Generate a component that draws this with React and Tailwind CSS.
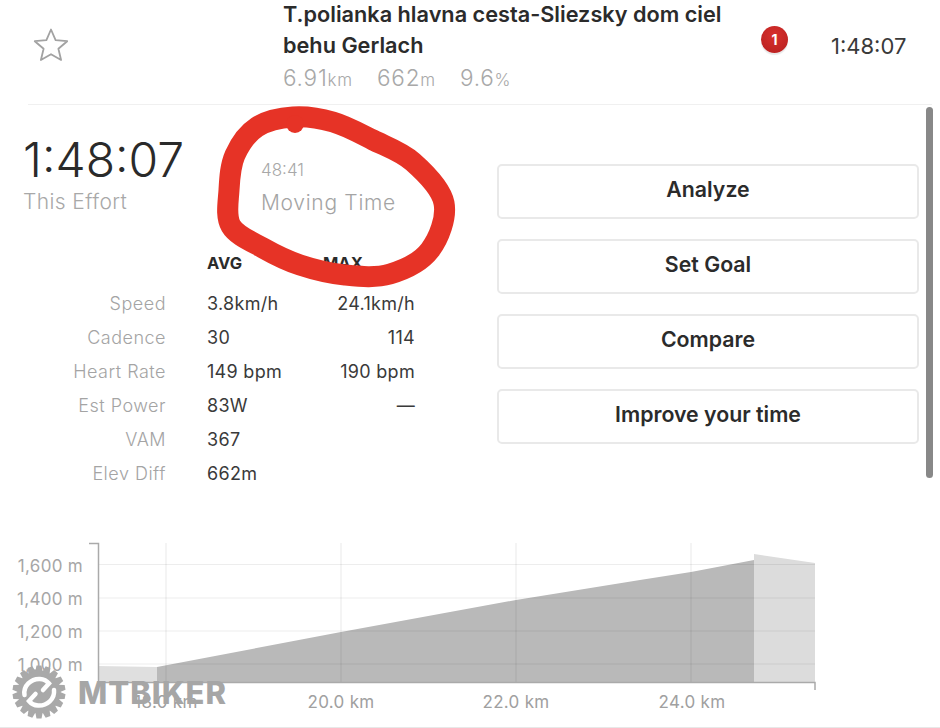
import React from "react";

function smooth(pts) {
  const n = pts.length;
  let d = `M${pts[0][0]} ${pts[0][1]}`;
  for (let i = 0; i < n; i++) {
    const p0 = pts[(i - 1 + n) % n], p1 = pts[i], p2 = pts[(i + 1) % n], p3 = pts[(i + 2) % n];
    const c1 = [p1[0] + (p2[0] - p0[0]) / 6, p1[1] + (p2[1] - p0[1]) / 6];
    const c2 = [p2[0] - (p3[0] - p1[0]) / 6, p2[1] - (p3[1] - p1[1]) / 6];
    d += ` C${c1[0]} ${c1[1]} ${c2[0]} ${c2[1]} ${p2[0]} ${p2[1]}`;
  }
  return d + "Z";
}

const scribble = [[293, 117], [333, 122], [373, 140], [413, 162], [444, 203], [430, 250], [390, 274], [345, 275], [300, 265], [263, 248], [231, 226], [229, 190], [235, 155], [257, 127]];

const rows = [
  ["Speed", "3.8km/h", "24.1km/h"],
  ["Cadence", "30", "114"],
  ["Heart Rate", "149 bpm", "190 bpm"],
  ["Est Power", "83W", "—"],
  ["VAM", "367", ""],
  ["Elev Diff", "662m", ""],
];

function Chart() {
  const gy = [36.5, 70, 103, 136];
  const gx = [166, 341, 516, 691];
  return (
    <svg width="940" height="200" viewBox="0 0 940 200" className="block" style={{ fontFamily: "Inter, sans-serif" }}>
      <polygon points="98,138 157,139 157,154 98,154" fill="#dfdfdf" />
      <polygon points="157,139 341,104 516,72 640,52 691,44 754,32 754,154 157,154" fill="#b9b9b9" />
      <polygon points="754,26 815,35 815,154 754,154" fill="#dcdcdc" />
      {gy.map((y) => (
        <line key={y} x1="98" x2="815" y1={y} y2={y} stroke="#000" strokeOpacity="0.07" />
      ))}
      {gx.map((x) => (
        <line key={x} x1={x} x2={x} y1="15" y2="154" stroke="#000" strokeOpacity="0.09" />
      ))}
      <path d="M89 15.5H98.5V154" fill="none" stroke="#aaa" strokeWidth="1.5" />
      <path d="M98 154.5H815V162" fill="none" stroke="#aaa" strokeWidth="1.5" />
      {[["1,600 m", 43.5], ["1,400 m", 76.5], ["1,200 m", 109.5], ["1,000 m", 142.5]].map(([t, y]) => (
        <text key={t} x="83" y={y} textAnchor="end" fontSize="17" letterSpacing="0.3" fill="#a6a6a6">{t}</text>
      ))}
      {[["18.0 km", 166], ["20.0 km", 341], ["22.0 km", 516], ["24.0 km", 692]].map(([t, x]) => (
        <text key={t} x={x} y="180" textAnchor="middle" fontSize="17" letterSpacing="0.3" fill="#a0a0a0">{t}</text>
      ))}
    </svg>
  );
}

function Gear() {
  const teeth = Array.from({ length: 18 }, (_, i) => (i * 360) / 18);
  return (
    <svg width="54" height="54" viewBox="0 0 54 54">
      {teeth.map((a) => (
        <polygon key={a} points="24.5,0.5 29.5,0.5 31,8 23,8" fill="#a9a9a9" transform={`rotate(${a} 27 27)`} />
      ))}
      <circle cx="27" cy="27" r="21.5" fill="#a9a9a9" />
      <path d="M12.5 30 C11 21 19 13.5 28 14 C32 14.2 35 16 37 18.5 L31 25" fill="none" stroke="#fff" strokeWidth="4.5" strokeLinecap="round" />
      <path d="M42 25 C43 34 35 41 26 40.5 C22 40.3 19 38.5 17 36 L23.5 29" fill="none" stroke="#fff" strokeWidth="4.5" strokeLinecap="round" />
    </svg>
  );
}

export default function App() {
  return (
    <div className="relative w-[940px] h-[728px] overflow-hidden bg-white font-['Inter',sans-serif]">
      <header className="flex h-[105px] ml-[28px] mr-[8px] border-b border-[#f0f0f0]">
        <div className="w-[255px] pt-[27px] pl-[5px]">
          <svg width="36" height="36" viewBox="0 0 36 36" fill="none" stroke="#a2a2a2" strokeWidth="1.8" strokeLinejoin="round">
            <path d="M18 2.5 L22.6 13.2 L34.2 14.2 L25.4 21.8 L28.1 33 L18 27.2 L7.9 33 L10.6 21.8 L1.8 14.2 L13.4 13.2 Z" />
          </svg>
        </div>
        <div className="w-[478px]">
          <div className="text-[21.7px] leading-[31px] font-semibold text-[#2b2b2b] -mt-[1px] w-[450px]">
            T.polianka hlavna cesta-Sliezsky dom ciel behu Gerlach
          </div>
          <div className="flex gap-[24px] items-baseline mt-[1px] text-[22.5px] leading-[32px] font-light text-[#a8a8a8] tracking-[0.8px]">
            <span>6.91<span className="text-[17px]">km</span></span>
            <span>662<span className="text-[17px]">m</span></span>
            <span>9.6<span className="text-[17px]">%</span></span>
          </div>
        </div>
        <div className="w-[26px] pt-[26px]">
          <div className="flex items-center justify-center w-[27px] h-[27px] rounded-full bg-[radial-gradient(circle_at_50%_35%,#d8302c,#b51f1f)] text-white text-[14px] font-bold shadow-[0_2px_1px_#e8e8e8]">
            1
          </div>
        </div>
        <div className="ml-[44px] pt-[31px] text-[22px] leading-[30px] text-[#3a3a3a]">1:48:07</div>
      </header>

      <main className="flex h-[423px]">
        <section className="w-[497px] shrink-0">
          <div className="flex pl-[23px] pt-[26px]">
            <div className="w-[238px]">
              <div className="text-[48px] leading-[58px] font-light text-[#2a2a2a]">1:48:07</div>
              <div className="text-[21px] leading-[26px] font-light text-[#a8a8a8] tracking-[0.4px]">This Effort</div>
            </div>
            <div className="pt-[27px]">
              <div className="text-[17px] leading-[24px] font-light text-[#a8a8a8]">48:41</div>
              <div className="text-[21px] leading-[40px] font-light text-[#a4a4a4] tracking-[0.7px] mt-[1px]">Moving Time</div>
            </div>
          </div>
          <div className="grid grid-cols-[166px_125px_124px] mt-[29px] w-[415px] text-[18px] auto-rows-[34px] items-center">
            <div className="col-start-2 self-start pl-[41px] leading-[22px] text-[16.5px] font-bold text-[#2b2b2b]">AVG</div>
            <div className="self-start pl-[32px] leading-[22px] text-[16.5px] font-bold text-[#2b2b2b]">MAX</div>
            {rows.map(([label, avg, max]) => (
              <React.Fragment key={label}>
                <div className="text-right font-light tracking-[0.5px] text-[#a4a4a4]">{label}</div>
                <div className="pl-[41px] tracking-[0.3px] text-[#3a3a3a]">{avg}</div>
                <div className="text-right tracking-[0.3px] text-[#3a3a3a]">{max}</div>
              </React.Fragment>
            ))}
          </div>
        </section>
        <section className="w-[422px] pt-[59px] flex flex-col gap-[20px]">
          {["Analyze", "Set Goal", "Compare", "Improve your time"].map((t) => (
            <button key={t} className="h-[55px] pb-[3px] border-2 border-[#e9e9e9] rounded-[5px] text-[21.3px] font-semibold text-[#2b2b2b] bg-white">
              {t}
            </button>
          ))}
        </section>
      </main>

      <Chart />

      <div className="absolute left-0 right-0 bottom-0 h-px bg-[#e8e8e8]" />
      <div className="absolute left-[926px] top-[107px] w-[7px] h-[371px] rounded-full bg-[#888888]" />

      <svg className="absolute left-0 top-0 pointer-events-none" width="940" height="728" viewBox="0 0 940 728">
        <path d={smooth(scribble)} fill="none" stroke="#e63326" strokeWidth="21" strokeLinejoin="round" />
        <circle cx="295" cy="124" r="9" fill="#e63326" />
      </svg>

      <div className="absolute left-[12px] top-[665px] flex items-center gap-[12px]">
        <Gear />
        <span className="text-[31px] leading-none font-extrabold tracking-[1px] text-[#a6a6a6]">MTBIKER</span>
      </div>
    </div>
  );
}
